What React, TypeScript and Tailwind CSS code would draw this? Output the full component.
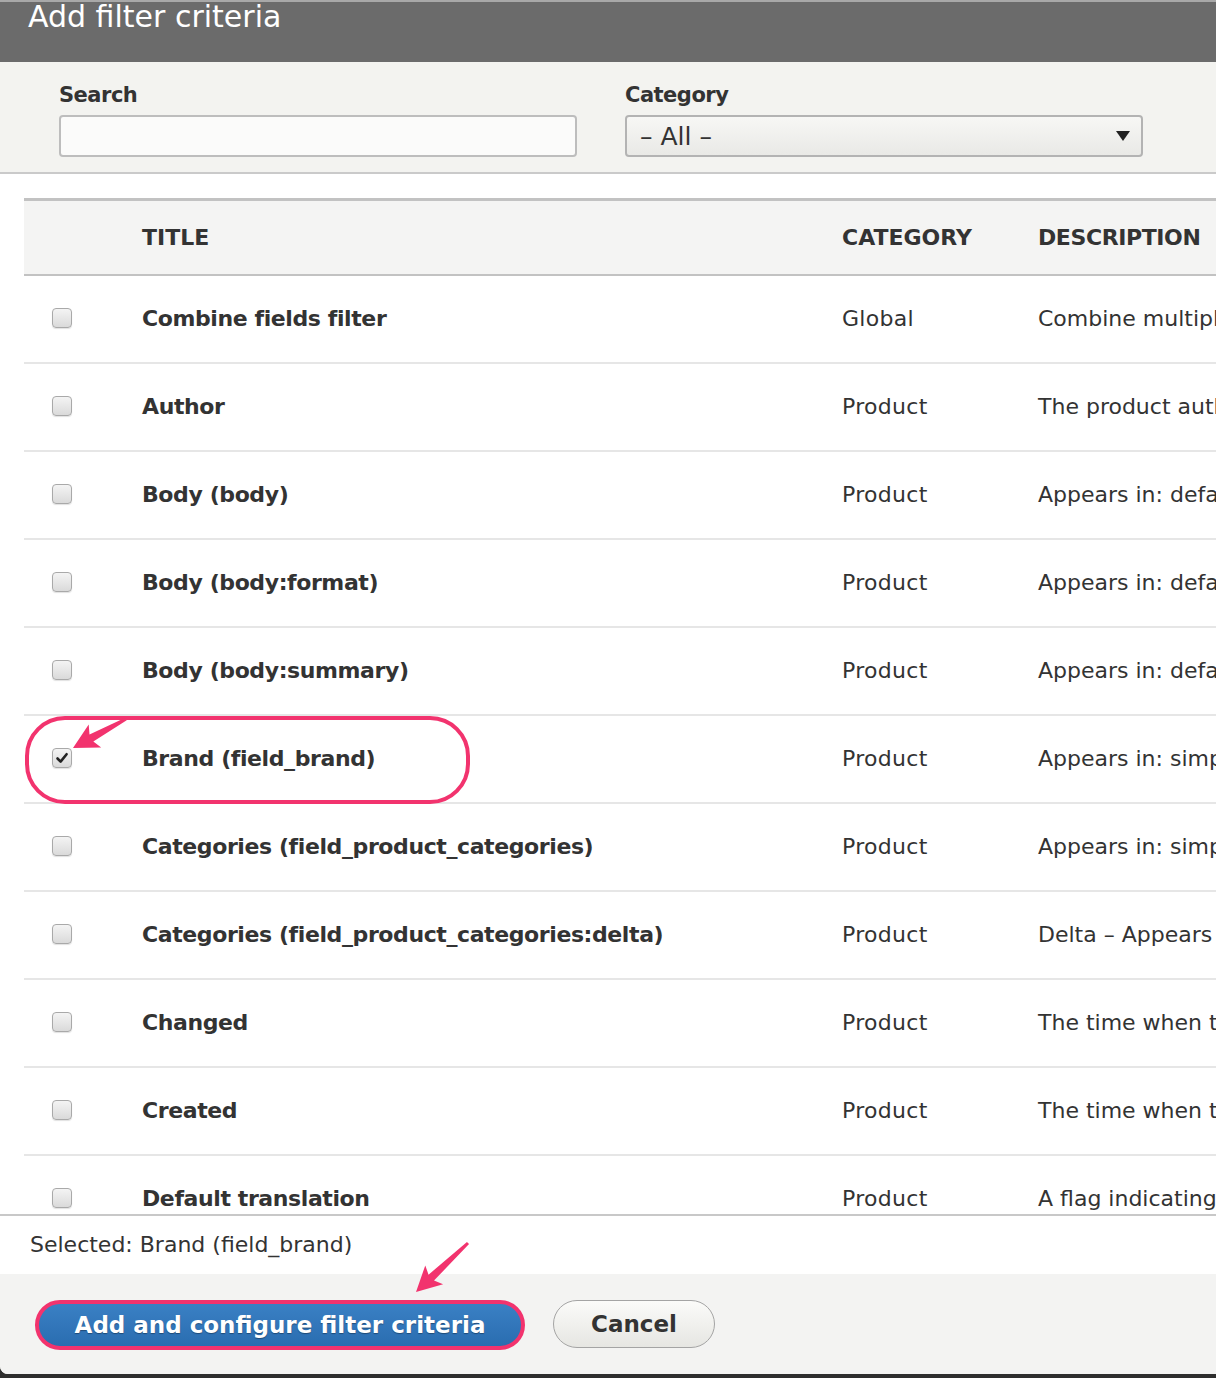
import React from "react";

type Row = { title: string; category: string; description: string; checked?: boolean };

const rows: Row[] = [
  { title: "Combine fields filter", category: "Global", description: "Combine multiple fields together and search by them." },
  { title: "Author", category: "Product", description: "The product author." },
  { title: "Body (body)", category: "Product", description: "Appears in: default." },
  { title: "Body (body:format)", category: "Product", description: "Appears in: default." },
  { title: "Body (body:summary)", category: "Product", description: "Appears in: default." },
  { title: "Brand (field_brand)", category: "Product", description: "Appears in: simple.", checked: true },
  { title: "Categories (field_product_categories)", category: "Product", description: "Appears in: simple." },
  { title: "Categories (field_product_categories:delta)", category: "Product", description: "Delta – Appears in: simple." },
  { title: "Changed", category: "Product", description: "The time when the product was last edited." },
  { title: "Created", category: "Product", description: "The time when the product was created." },
  { title: "Default translation", category: "Product", description: "A flag indicating whether this is the default translation." },
];

const Checkbox = ({ checked }: { checked?: boolean }) => (
  <span className="flex h-[20px] w-[20px] items-center justify-center rounded-[4px] border-[1.5px] border-[#a9a9a9] bg-gradient-to-b from-[#f4f4f4] to-[#dadada] shadow-[0_1px_1px_rgba(0,0,0,0.12)]">
    {checked && (
      <svg width="14" height="14" viewBox="0 0 14 14">
        <path d="M2.5 7.5 L5.6 10.6 L11.6 3.2" fill="none" stroke="#222" strokeWidth="2.6" strokeLinecap="round" strokeLinejoin="round" />
      </svg>
    )}
  </span>
);

// pink annotation arrow from tail to tip
const Arrow = ({ x1, y1, x2, y2 }: { x1: number; y1: number; x2: number; y2: number }) => {
  const dx = x2 - x1;
  const dy = y2 - y1;
  const len = Math.hypot(dx, dy);
  const ux = dx / len;
  const uy = dy / len;
  const px = -uy;
  const py = ux;
  const headLen = 25;
  const headW = 13;
  const bx = x2 - ux * headLen;
  const by = y2 - uy * headLen;
  const pts = [
    [x1 + px * 1.5, y1 + py * 1.5],
    [bx + px * 4 + ux * 4, by + py * 4 + uy * 4],
    [bx + px * headW, by + py * headW],
    [x2, y2],
    [bx - px * headW, by - py * headW],
    [bx - px * 4 + ux * 4, by - py * 4 + uy * 4],
    [x1 - px * 1.5, y1 - py * 1.5],
  ];
  return <polygon points={pts.map((p) => p.join(",")).join(" ")} fill="#f2336e" />;
};

export default function App() {
  return (
    <div
      className="relative h-[1378px] w-[1216px] overflow-hidden bg-[#2e2e2e] text-[#333]"
      style={{ fontFamily: '"DejaVu Sans", Verdana, sans-serif' }}
    >
      <div className="flex h-[1374px] flex-col rounded-bl-[8px] bg-white">
        {/* title bar */}
        <div className="h-[62px] shrink-0 border-t-[2px] border-[#a8a8a8] bg-[#6b6b6b] pl-[28px]">
          <div className="text-[30px] leading-[30px] text-white">Add filter criteria</div>
        </div>

        {/* filters */}
        <div className="flex h-[112px] shrink-0 gap-[48px] border-b-[2px] border-[#cacaca] bg-[#f3f3f0] pl-[59px] pt-[18px]">
          <div className="w-[518px]">
            <div className="text-[21px] font-bold leading-[30px] tracking-[-0.5px]">Search</div>
            <div className="mt-[5px] h-[42px] rounded-[4px] border-[2px] border-[#bdbdbd] bg-[#fbfbfa]" />
          </div>
          <div className="w-[518px]">
            <div className="text-[21px] font-bold leading-[30px] tracking-[-0.5px]">Category</div>
            <div className="mt-[5px] flex h-[42px] items-center justify-between rounded-[4px] border-[2px] border-[#b3b3b3] bg-gradient-to-b from-[#f7f7f5] to-[#e9e9e6] pl-[13px] pr-[10px]">
              <span className="text-[25px] leading-none">– All –</span>
              <svg width="16" height="12" viewBox="0 0 16 12">
                <path d="M1 1 L15 1 L8 11 Z" fill="#222" />
              </svg>
            </div>
          </div>
        </div>

        {/* table */}
        <div className="h-[1042px] shrink-0 overflow-hidden border-b-[2px] border-[#c8c8c8] pl-[24px] pt-[24px]">
          <div className="w-[1400px]">
            <div className="grid h-[78px] grid-cols-[118px_700px_196px_1fr] items-center border-y-[3px] border-b-[2px] border-[#c2c2c2] bg-[#f4f4f3] text-[22px] font-bold uppercase">
              <div />
              <div>Title</div>
              <div>Category</div>
              <div className="tracking-[-0.4px]">Description</div>
            </div>
            {rows.map((r) => (
              <div
                key={r.title}
                className="grid h-[88px] grid-cols-[118px_700px_196px_1fr] items-center border-b-[2px] border-[#e6e6e6] pb-[2px] text-[22px]"
              >
                <div className="pl-[28px]">
                  <Checkbox checked={r.checked} />
                </div>
                <div className="whitespace-nowrap font-bold tracking-[-0.4px]">{r.title}</div>
                <div className="whitespace-nowrap tracking-[0.3px]">{r.category}</div>
                <div className="whitespace-nowrap">{r.description}</div>
              </div>
            ))}
          </div>
        </div>

        {/* selected */}
        <div className="flex h-[58px] shrink-0 items-center pb-[2px] pl-[30px] text-[22px]">Selected: Brand (field_brand)</div>

        {/* footer */}
        <div className="flex flex-1 items-start gap-[28px] rounded-bl-[8px] bg-[#f3f3f2] pl-[35px] pt-[26px]">
          <button className="flex h-[50px] w-[490px] items-center justify-center rounded-full border-[4px] border-[#f2336e] bg-gradient-to-b from-[#3a80c4] to-[#2a6db0] text-[23px] font-bold text-white [text-shadow:0_1px_1px_rgba(0,0,0,0.35)]">
            Add and configure filter criteria
          </button>
          <button className="flex h-[48px] w-[162px] items-center justify-center rounded-full border-[1.5px] border-[#a4a4a4] bg-gradient-to-b from-[#fbfbf9] to-[#e6e6e2] text-[23px] font-bold text-[#333]">
            Cancel
          </button>
        </div>
      </div>

      {/* annotations */}
      <div className="pointer-events-none absolute left-[25px] top-[716px] h-[88px] w-[445px] rounded-[40px] border-[4px] border-[#f2336e]" />
      <svg className="pointer-events-none absolute left-0 top-0" width="1216" height="1378">
        <Arrow x1={126} y1={719} x2={73} y2={748} />
        <Arrow x1={468} y1={1243} x2={416} y2={1292} />
      </svg>
    </div>
  );
}
